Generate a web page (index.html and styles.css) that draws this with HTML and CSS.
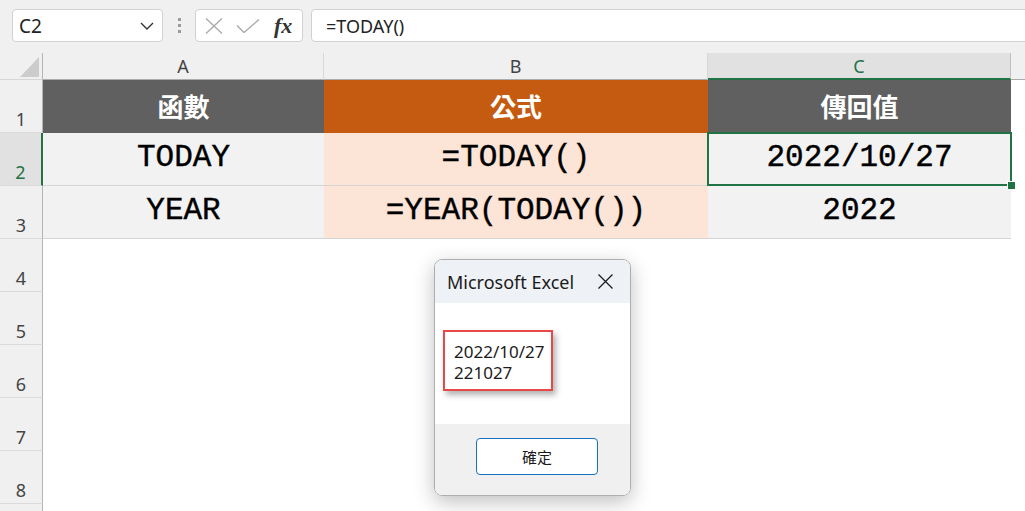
FILE: index.html
```html
<!DOCTYPE html>
<html lang="zh-Hant">
<head>
    <meta charset="UTF-8">
    <meta name="viewport" content="width=device-width, initial-scale=1.0">
    <title>TODAY 函數</title>
    <link rel="stylesheet" href="styles.css">
</head>
<body>
    <div class="toolbar">
        <div class="name-box">
            <span>C2</span>
            <svg width="14" height="8" viewBox="0 0 14 8"><path d="M1 1l6 6 6-6" stroke="#333" stroke-width="1.4" fill="none"/></svg>
        </div>
        <div class="grip"><i></i><i></i><i></i></div>
        <div class="fx-box">
            <svg width="18" height="16" viewBox="0 0 18 16"><path d="M1 0.5l16 15M17 0.5l-16 15" stroke="#a8a8a8" stroke-width="1.3" fill="none"/></svg>
            <svg width="24" height="14" viewBox="0 0 24 14"><path d="M1 6.5l7 7L23 0.5" stroke="#a8a8a8" stroke-width="1.3" fill="none"/></svg>
            <span class="fx">fx</span>
        </div>
        <div class="formula">=TODAY()</div>
    </div>

    <div class="sheet">
        <div class="corner">
            <svg width="19" height="20" viewBox="0 0 19 20"><path d="M19 0V20H0Z" fill="#cccccc"/></svg>
        </div>
        <div class="col-head">A</div>
        <div class="col-head">B</div>
        <div class="col-head active">C</div>
        <div class="col-head rest"></div>

        <div class="row-head">1</div>
        <div class="cell head">函數</div>
        <div class="cell head accent">公式</div>
        <div class="cell head">傳回值</div>
        <div class="cell blank"></div>

        <div class="row-head active">2</div>
        <div class="cell data">TODAY</div>
        <div class="cell data accent">=TODAY()</div>
        <div class="cell data selected">2022/10/27</div>
        <div class="cell blank"></div>

        <div class="row-head">3</div>
        <div class="cell data">YEAR</div>
        <div class="cell data accent">=YEAR(TODAY())</div>
        <div class="cell data">2022</div>
        <div class="cell blank"></div>

        <div class="row-head">4</div>
        <div class="cell empty"></div>
        <div class="row-head">5</div>
        <div class="cell empty"></div>
        <div class="row-head">6</div>
        <div class="cell empty"></div>
        <div class="row-head">7</div>
        <div class="cell empty"></div>
        <div class="row-head">8</div>
        <div class="cell empty"></div>
        <div class="row-head"></div>
        <div class="cell empty"></div>
    </div>

    <!-- MsgBox -->
    <div class="dialog">
        <div class="dialog-title">
            <span>Microsoft Excel</span>
            <svg width="15" height="15" viewBox="0 0 15 15"><path d="M0.5 0.5l14 14M14.5 0.5l-14 14" stroke="#1b1b1b" stroke-width="1.3" fill="none"/></svg>
        </div>
        <div class="dialog-body">
            <div class="message">2022/10/27<br>221027</div>
        </div>
        <div class="dialog-foot">
            <button class="ok">確定</button>
        </div>
    </div>
</body>
</html>
```

FILE: styles.css
```css
* {
    box-sizing: border-box;
}
body {
    margin: 0;
    height: 511px;
    overflow: hidden;
    position: relative;
    background: #fff;
    font-family: "Noto Sans", sans-serif;
}

/* formula bar */
.toolbar {
    display: flex;
    align-items: flex-start;
    height: 53px;
    padding: 9px 0 0 12px;
    background: #f0f0f0;
}
.name-box {
    width: 151px;
    height: 33px;
    display: flex;
    align-items: center;
    justify-content: space-between;
    padding: 0 8px 0 6px;
    background: #fff;
    border: 1px solid #d1d1d1;
    border-radius: 4px;
    font-size: 19px;
    color: #222;
}
.grip {
    width: 32px;
    height: 33px;
    display: flex;
    flex-direction: column;
    align-items: center;
    justify-content: center;
    gap: 3px;
}
.grip i {
    width: 3px;
    height: 3px;
    background: #9a9a9a;
}
.fx-box {
    width: 108px;
    height: 33px;
    display: flex;
    align-items: center;
    gap: 13px;
    padding-left: 9px;
    background: #fff;
    border: 1px solid #d1d1d1;
    border-radius: 4px;
}
.fx {
    font-family: "Liberation Serif", serif;
    font-style: italic;
    font-weight: bold;
    font-size: 22px;
    color: #333;
    margin-left: 1px;
}
.formula {
    flex: 1;
    height: 33px;
    margin-left: 8px;
    margin-right: -10px;
    padding-left: 14px;
    display: flex;
    align-items: center;
    background: #fff;
    border: 1px solid #d1d1d1;
    border-radius: 4px;
    font-size: 18px;
    color: #222;
}

/* worksheet */
.sheet {
    display: grid;
    grid-template-columns: 43px 281px 384px 303px 1fr;
    grid-template-rows: 27px repeat(9, 53px);
}
.corner {
    display: flex;
    align-items: flex-end;
    justify-content: flex-end;
    padding: 0 3px 2px 0;
    background: #f0f0f0;
    border-right: 1px solid #b4b4b4;
    border-bottom: 1px solid #d6d6d6;
}
.col-head {
    display: flex;
    align-items: center;
    justify-content: center;
    background: #f0f0f0;
    border-right: 1px solid #d8d8d8;
    border-bottom: 1px solid #ababab;
    font-size: 18px;
    color: #444;
}
.col-head.active {
    background: #e1e1e1;
    border-right-color: #c0c0c0;
    border-bottom: 2px solid #217346;
    color: #217346;
}
.col-head.rest {
    border-right: 0;
}
.row-head {
    display: flex;
    align-items: flex-end;
    justify-content: center;
    padding-bottom: 1px;
    background: #f0f0f0;
    border-right: 1px solid #b4b4b4;
    border-bottom: 1px solid #dadada;
    font-size: 18px;
    color: #444;
}
.row-head.active {
    background: #e1e1e1;
    border-right: 2px solid #217346;
    color: #217346;
}
.cell {
    display: flex;
    align-items: center;
    justify-content: center;
}
.cell.head {
    padding-bottom: 3px;
    background: #606060;
    font-family: "Noto Sans CJK TC", sans-serif;
    font-weight: bold;
    font-size: 26px;
    color: #fff;
}
.cell.head.accent {
    background: #c55a11;
}
.cell.data {
    padding-bottom: 4px;
    background: #f2f2f2;
    border-bottom: 1px solid #d4d4d4;
    font-family: "Liberation Mono", monospace;
    font-size: 31px;
    color: #000;
    -webkit-text-stroke: 0.4px #000;
}
.cell.data.accent {
    background: #fce4d6;
}
.cell.selected {
    position: relative;
}
.cell.selected::before {
    content: "";
    position: absolute;
    top: -1px;
    left: -1px;
    right: -1px;
    bottom: -1px;
    border: 2px solid #217346;
}
.cell.selected::after {
    content: "";
    position: absolute;
    right: -4px;
    bottom: -4px;
    width: 7px;
    height: 7px;
    background: #217346;
    border-left: 1px solid #fff;
    border-top: 1px solid #fff;
}
.cell.empty {
    grid-column: 2 / -1;
}

/* message box */
.dialog {
    position: absolute;
    left: 434px;
    top: 259px;
    width: 197px;
    height: 237px;
    display: flex;
    flex-direction: column;
    border: 1px solid #aeaeae;
    border-radius: 8px;
    overflow: hidden;
    box-shadow: 0 6px 20px rgba(0, 0, 0, 0.25);
}
.dialog-title {
    height: 43px;
    display: flex;
    align-items: center;
    justify-content: space-between;
    padding: 0 17px 0 12px;
    background: #eef1f6;
    font-size: 18px;
    color: #1b1b1b;
}
.dialog-body {
    height: 121px;
    padding: 27px 0 0 8px;
    background: #fff;
}
.message {
    width: 110px;
    height: 61px;
    padding: 9px 0 0 9px;
    border: 2.5px solid #e84848;
    box-shadow: 3px 4px 6px rgba(0, 0, 0, 0.3);
    font-size: 17px;
    line-height: 21px;
    color: #1b1b1b;
}
.dialog-foot {
    flex: 1;
    padding: 14px 0 0 41px;
    background: #f0f0f0;
}
.ok {
    width: 122px;
    height: 37px;
    background: #fff;
    border: 1px solid #1a6fc0;
    border-radius: 4px;
    font-family: "Noto Sans CJK TC", sans-serif;
    font-size: 15px;
    color: #1b1b1b;
}
```
